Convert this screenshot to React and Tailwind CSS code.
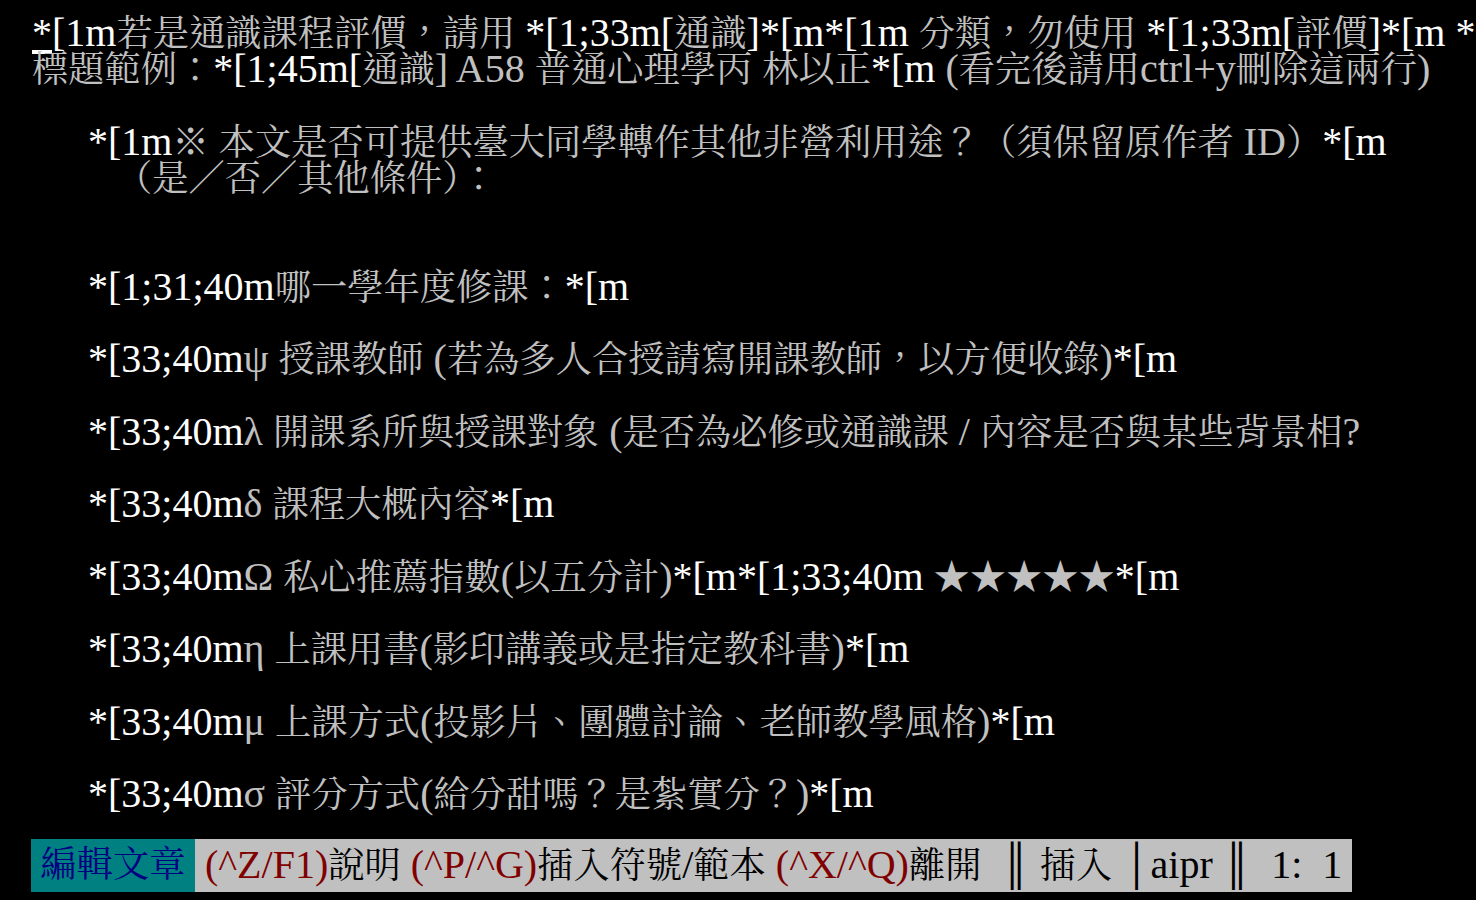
const W = 'text-white'
const G = 'text-[#c0c0c0]'
const CJK = /([\u2e80-\u9fff\uf900-\ufaff\uff00-\uffef\u3000-\u303f\u203b\u2605]+)/
const CJK_TEST = /^[\u2e80-\u9fff\uf900-\ufaff\uff00-\uffef\u3000-\u303f\u203b\u2605]+$/

const LINES = [
  { pad: 'pl-[32px]', segs: [['*', 'cursor'], ['[1m', W], ['若是通識課程評價，請用 ', G], ['*[1;33m[', W], ['通識', G], [']*[m*[1m ', W], ['分類，勿使用 ', G], ['*[1;33m[', W], ['評價', G], [']*[m *', W]] },
  { pad: 'pl-[32px]', segs: [['標題範例：', G], ['*[1;45m[', W], ['通識] A58 普通心理學丙 林以正', G], ['*[m ', W], ['(看完後請用ctrl+y刪除這兩行)', G]] },
  null,
  { pad: 'pl-[88px]', segs: [['*[1m', W], ['※ 本文是否可提供臺大同學轉作其他非營利用途？（須保留原作者 ID）', G], ['*[m', W]] },
  { pad: 'pl-[116px]', segs: [['（是／否／其他條件）：', G]] },
  null,
  null,
  { pad: 'pl-[88px]', segs: [['*[1;31;40m', W], ['哪一學年度修課：', G], ['*[m', W]] },
  null,
  { pad: 'pl-[88px]', segs: [['*[33;40m', W], ['ψ 授課教師 (若為多人合授請寫開課教師，以方便收錄)', G], ['*[m', W]] },
  null,
  { pad: 'pl-[88px]', segs: [['*[33;40m', W], ['λ 開課系所與授課對象 (是否為必修或通識課 / 內容是否與某些背景相?', G]] },
  null,
  { pad: 'pl-[88px]', segs: [['*[33;40m', W], ['δ 課程大概內容', G], ['*[m', W]] },
  null,
  { pad: 'pl-[88px]', segs: [['*[33;40m', W], ['Ω 私心推薦指數(以五分計)', G], ['*[m*[1;33;40m', W], [' ★★★★★', G], ['*[m', W]] },
  null,
  { pad: 'pl-[88px]', segs: [['*[33;40m', W], ['η 上課用書(影印講義或是指定教科書)', G], ['*[m', W]] },
  null,
  { pad: 'pl-[88px]', segs: [['*[33;40m', W], ['μ 上課方式(投影片、團體討論、老師教學風格)', G], ['*[m', W]] },
  null,
  { pad: 'pl-[88px]', segs: [['*[33;40m', W], ['σ 評分方式(給分甜嗎？是紮實分？)', G], ['*[m', W]] },
]

// wide (CJK) runs get a smaller size so each glyph fills one 36.25px cell
function Txt({ s, className = '' }) {
  return s.split(CJK).filter(Boolean).map((p, i) => (
    <span key={i} className={`${className} ${CJK_TEST.test(p) ? 'text-[36.25px]' : ''}`}>{p}</span>
  ))
}

function Row({ line }) {
  if (!line) return <div className="h-[36.25px]" />
  return (
    <div className={`h-[36.25px] whitespace-pre ${line.pad}`}>
      {line.segs.map(([t, c], i) =>
        c === 'cursor'
          ? <span key={i} className="text-white underline underline-offset-[4px]">{t}</span>
          : <Txt key={i} s={t} className={c} />
      )}
    </div>
  )
}

export default function App() {
  return (
    <div className="w-full h-[900px] bg-black overflow-hidden font-['Liberation_Serif','Noto_Serif_CJK_TC','Noto_Sans_CJK_TC',serif] text-[40px] leading-[36.25px]">
      <div className="pt-[15px]">
        {LINES.map((l, i) => <Row key={i} line={l} />)}
        <div className="h-[26.5px]" />
        <div className="ml-[31px] w-[1321px] h-[53px] flex items-center bg-[#c0c0c0] whitespace-pre overflow-hidden">
          <div className="w-[164px] shrink-0 h-full bg-[#008080] text-[#000080] flex items-center justify-center text-[36.25px]">編輯文章</div>
          <div className="min-w-0 text-black">
            <Txt s=" (^Z/F1)" className="text-[#800000]" /><Txt s="說明" />
            <Txt s=" (^P/^G)" className="text-[#800000]" /><Txt s="插入符號/範本" />
            <Txt s=" (^X/^Q)" className="text-[#800000]" /><Txt s="離開  ║ 插入 │aipr ║  1:  1" />
          </div>
        </div>
      </div>
    </div>
  )
}
